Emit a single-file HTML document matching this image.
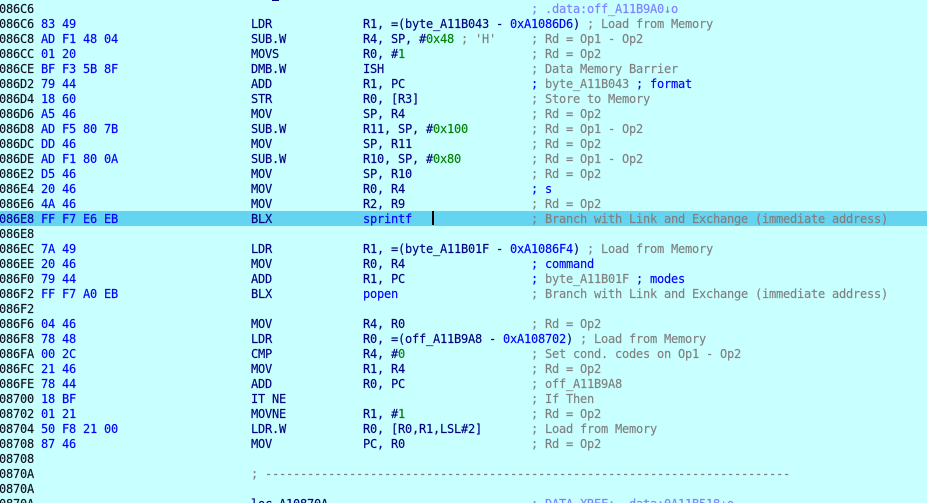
<!DOCTYPE html>
<html><head><meta charset="utf-8">
<style>
html,body{margin:0;padding:0;width:927px;height:503px;overflow:hidden;background:#c8ffff}
#v{position:relative;width:927px;height:503px;overflow:hidden;background:#c8ffff;font:12px/15px "DejaVu Sans Mono","Liberation Mono",monospace;letter-spacing:-.224px;color:#000080;-webkit-text-stroke:.15px}
.r{position:absolute;left:0;width:927px;height:15px;white-space:pre}
.r span.a,.r span.b,.r span.m,.r span.o,.r span.c{position:absolute;top:1px}
.a{left:-1px;color:#101020}
.b{left:41px;color:#0000ff}
.m{left:251px}
.o{left:363px}
.c{left:531px;color:#808080}
i{font-style:normal}
.g{color:#008000}.n{color:#0000ff}.y{color:#808080}.x{color:#8080ff}
.hl{background:#64d4f0}
.hl .a{color:#0000a0}
</style></head><body><div id="v">
<div style="position:absolute;left:272px;top:0;width:7px;height:1px;background:#000080"></div>
<div class="r" style="top:1px"><span class="a">086C6</span><span class="c x">; .data:off_A11B9A0↓o</span></div>
<div class="r" style="top:16px"><span class="a">086C6</span><span class="b">83 49</span><span class="m">LDR</span><span class="o">R1, =(byte_A11B043 - <i class="n">0xA1086D6</i>) <i class="y">; Load from Memory</i></span></div>
<div class="r" style="top:31px"><span class="a">086C8</span><span class="b">AD F1 48 04</span><span class="m">SUB.W</span><span class="o">R4, SP, #<i class="g">0x48</i> <i class="y">; 'H'</i></span><span class="c">; Rd = Op1 - Op2</span></div>
<div class="r" style="top:46px"><span class="a">086CC</span><span class="b">01 20</span><span class="m">MOVS</span><span class="o">R0, #<i class="g">1</i></span><span class="c">; Rd = Op2</span></div>
<div class="r" style="top:61px"><span class="a">086CE</span><span class="b">BF F3 5B 8F</span><span class="m">DMB.W</span><span class="o">ISH</span><span class="c">; Data Memory Barrier</span></div>
<div class="r" style="top:76px"><span class="a">086D2</span><span class="b">79 44</span><span class="m">ADD</span><span class="o">R1, PC</span><span class="c"><i class="n">;</i> byte_A11B043 <i class="n">; format</i></span></div>
<div class="r" style="top:91px"><span class="a">086D4</span><span class="b">18 60</span><span class="m">STR</span><span class="o">R0, [R3]</span><span class="c">; Store to Memory</span></div>
<div class="r" style="top:106px"><span class="a">086D6</span><span class="b">A5 46</span><span class="m">MOV</span><span class="o">SP, R4</span><span class="c">; Rd = Op2</span></div>
<div class="r" style="top:121px"><span class="a">086D8</span><span class="b">AD F5 80 7B</span><span class="m">SUB.W</span><span class="o">R11, SP, #<i class="g">0x100</i></span><span class="c">; Rd = Op1 - Op2</span></div>
<div class="r" style="top:136px"><span class="a">086DC</span><span class="b">DD 46</span><span class="m">MOV</span><span class="o">SP, R11</span><span class="c">; Rd = Op2</span></div>
<div class="r" style="top:151px"><span class="a">086DE</span><span class="b">AD F1 80 0A</span><span class="m">SUB.W</span><span class="o">R10, SP, #<i class="g">0x80</i></span><span class="c">; Rd = Op1 - Op2</span></div>
<div class="r" style="top:166px"><span class="a">086E2</span><span class="b">D5 46</span><span class="m">MOV</span><span class="o">SP, R10</span><span class="c">; Rd = Op2</span></div>
<div class="r" style="top:181px"><span class="a">086E4</span><span class="b">20 46</span><span class="m">MOV</span><span class="o">R0, R4</span><span class="c n">; s</span></div>
<div class="r" style="top:196px"><span class="a">086E6</span><span class="b">4A 46</span><span class="m">MOV</span><span class="o">R2, R9</span><span class="c">; Rd = Op2</span></div>
<div class="r hl" style="top:211px"><span class="a">086E8</span><span class="b">FF F7 E6 EB</span><span class="m">BLX</span><span class="o n">sprintf</span><span class="c">; Branch with Link and Exchange (immediate address)</span></div>
<div style="position:absolute;left:432px;top:211px;width:2px;height:14px;background:#000"></div>
<div class="r" style="top:226px"><span class="a">086E8</span></div>
<div class="r" style="top:241px"><span class="a">086EC</span><span class="b">7A 49</span><span class="m">LDR</span><span class="o">R1, =(byte_A11B01F - <i class="n">0xA1086F4</i>) <i class="y">; Load from Memory</i></span></div>
<div class="r" style="top:256px"><span class="a">086EE</span><span class="b">20 46</span><span class="m">MOV</span><span class="o">R0, R4</span><span class="c n">; command</span></div>
<div class="r" style="top:271px"><span class="a">086F0</span><span class="b">79 44</span><span class="m">ADD</span><span class="o">R1, PC</span><span class="c"><i class="n">;</i> byte_A11B01F <i class="n">; modes</i></span></div>
<div class="r" style="top:286px"><span class="a">086F2</span><span class="b">FF F7 A0 EB</span><span class="m">BLX</span><span class="o n">popen</span><span class="c">; Branch with Link and Exchange (immediate address)</span></div>
<div class="r" style="top:301px"><span class="a">086F2</span></div>
<div class="r" style="top:316px"><span class="a">086F6</span><span class="b">04 46</span><span class="m">MOV</span><span class="o">R4, R0</span><span class="c">; Rd = Op2</span></div>
<div class="r" style="top:331px"><span class="a">086F8</span><span class="b">78 48</span><span class="m">LDR</span><span class="o">R0, =(off_A11B9A8 - <i class="n">0xA108702</i>) <i class="y">; Load from Memory</i></span></div>
<div class="r" style="top:346px"><span class="a">086FA</span><span class="b">00 2C</span><span class="m">CMP</span><span class="o">R4, #<i class="g">0</i></span><span class="c">; Set cond. codes on Op1 - Op2</span></div>
<div class="r" style="top:361px"><span class="a">086FC</span><span class="b">21 46</span><span class="m">MOV</span><span class="o">R1, R4</span><span class="c">; Rd = Op2</span></div>
<div class="r" style="top:376px"><span class="a">086FE</span><span class="b">78 44</span><span class="m">ADD</span><span class="o">R0, PC</span><span class="c">; off_A11B9A8</span></div>
<div class="r" style="top:391px"><span class="a">08700</span><span class="b">18 BF</span><span class="m">IT NE</span><span class="c">; If Then</span></div>
<div class="r" style="top:406px"><span class="a">08702</span><span class="b">01 21</span><span class="m">MOVNE</span><span class="o">R1, #<i class="g">1</i></span><span class="c">; Rd = Op2</span></div>
<div class="r" style="top:421px"><span class="a">08704</span><span class="b">50 F8 21 00</span><span class="m">LDR.W</span><span class="o">R0, [R0,R1,LSL#2]</span><span class="c">; Load from Memory</span></div>
<div class="r" style="top:436px"><span class="a">08708</span><span class="b">87 46</span><span class="m">MOV</span><span class="o">PC, R0</span><span class="c">; Rd = Op2</span></div>
<div class="r" style="top:451px"><span class="a">08708</span></div>
<div class="r" style="top:466px"><span class="a">0870A</span><span class="m y">; ---------------------------------------------------------------------------</span></div>
<div class="r" style="top:481px"><span class="a">0870A</span></div>
<div class="r" style="top:496px"><span class="a">0870A</span><span class="m">loc_A10870A</span><span class="c x">; DATA XREF: .data:0A11B518↓o</span></div>
</div></body></html>
